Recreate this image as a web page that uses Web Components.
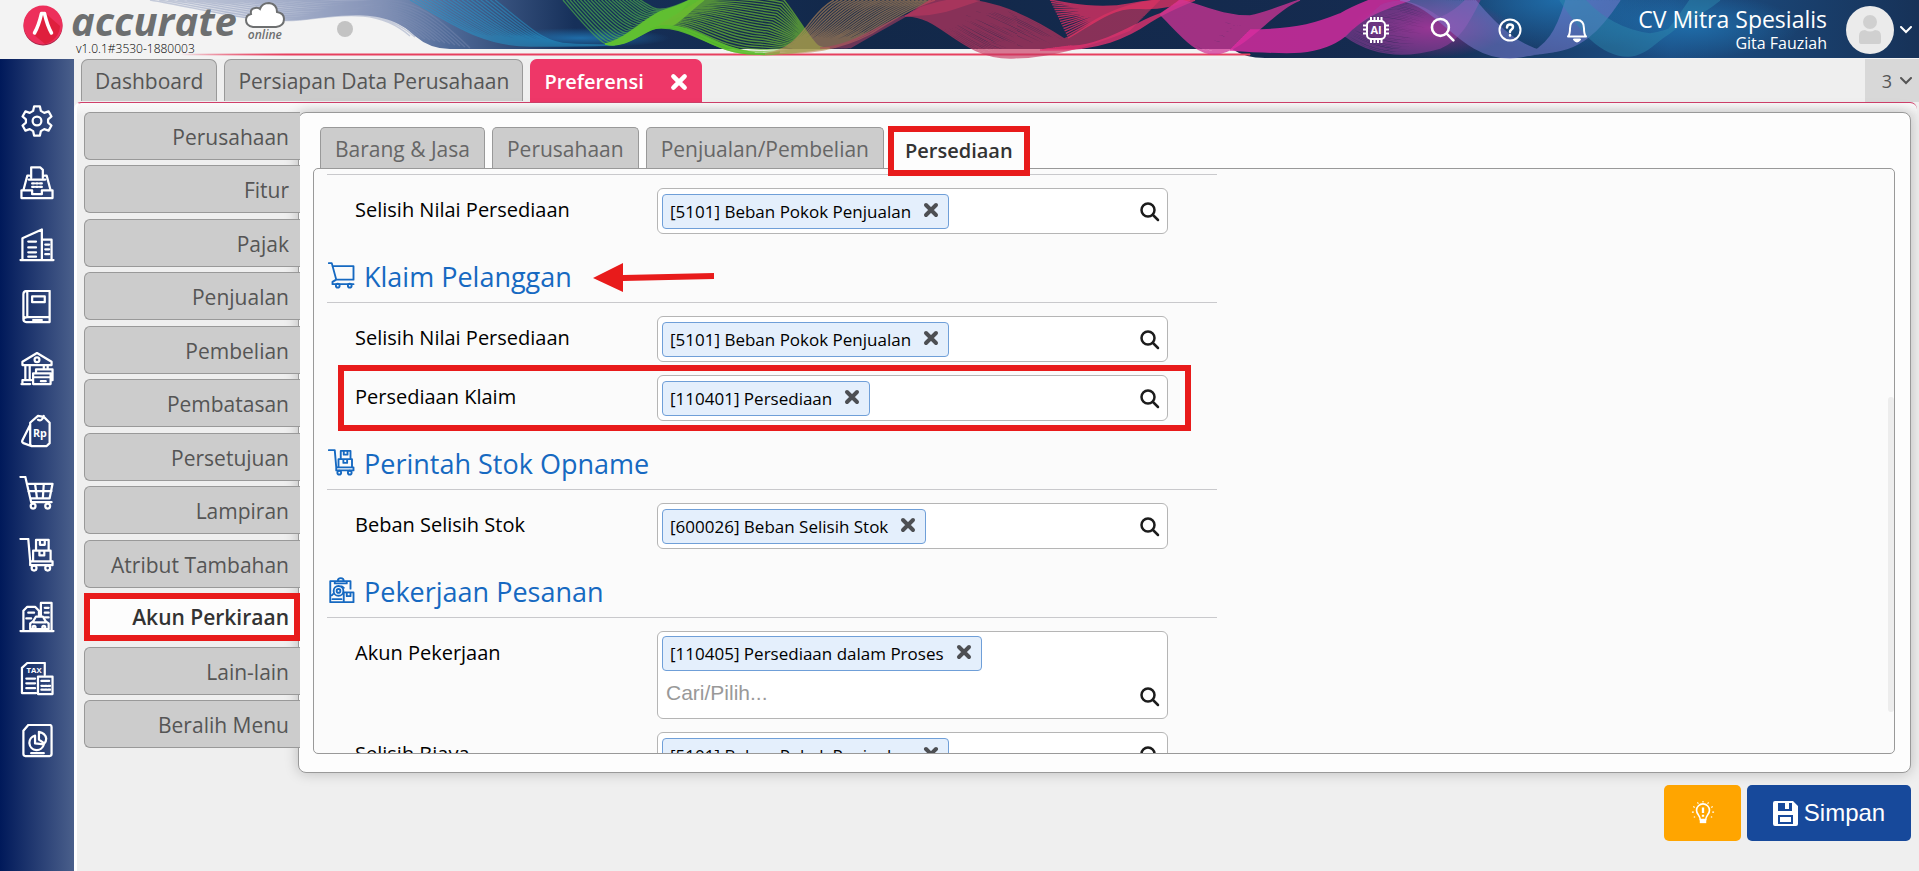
<!DOCTYPE html>
<html lang="id">
<head>
<meta charset="utf-8">
<title>Preferensi - Accurate Online</title>
<style>
  :root {
    --pink: #ee3768;
    --mark: #e81b1b;
    --line: #999;
    --tab: #ccc;
    --blue: #1669c1;
  }
  html, body {
    height: 100%;
  }
  body {
    margin: 0;
    background: #efefef;
    font-family: "Open Sans", "Noto Sans", sans-serif;
    color: #000;
  }
</style>
</head>
<body>
<accurate-app></accurate-app>

<script>
const icons = {
  gear: '<path d="M14 2.5h6l1 4.6 3.4 2 4.5-1.5 3 5.2-3.5 3.1v3.2l3.5 3.1-3 5.2-4.5-1.5-3.4 2-1 4.6h-6l-1-4.6-3.4-2-4.5 1.5-3-5.2 3.5-3.1v-3.2l-3.5-3.1 3-5.2 4.5 1.5 3.4-2z"/><circle cx="17" cy="17.5" r="4.5"/>',
  register: '<path d="M11 12V1.500h9.500l2.500 2.500v8M9 10H7L3 25M25 10h2l4 15M1 25h11v4h10v-4h11v8H1zM8.500 14h17"/><path d="M12 18h2m2 0h2m2 0h2M12 21.500h2m2 0h2m2 0h2" stroke-dasharray="2 2"/>',
  building: '<path d="M2 33V10.500L22 1.500V33M22 12h10v21M0 33h34M8 14h8M8 20h8M8 25h8M8 29.500h8M25.500 17h4M25.500 22h4M25.500 27h4"/>',
  book: '<path d="M7 1h23v32H6q-3 0-3-3V4q0-3 4-3v27M3 31q0-3 4-3h23M12 6.500h13v6H12zM13 31h9"/>',
  bank: '<path d="M2 13.500V10L17 1l15 9v3.500zM5 14v14M9.500 14v14M24 14v3M28 14v3M1 33h9M2 33v-4h9"/><circle cx="17" cy="8" r="2.500"/><path d="M13 22h18v11H13zM13 26h18M16 22v-4h17v11h-2M21 30h5"/>',
  tag: '<path d="M11 8l7-6 6 1 6 6v21l-3 3H12q-2 0-2-2V9zM10 11L2 27q-1 2 1 3l8 3M18 6q4 2 6-4"/><text x="20" y="24" text-anchor="middle" font-size="11" font-weight="700" fill="currentColor" stroke="none">Rp</text>',
  cart: '<path d="M0 1h5l6 26h21M7 8h26l-3 15H10M8 15.500h24M15 8l2 15M24 8l-1 15"/><circle cx="13" cy="31" r="2.500"/><circle cx="28" cy="31" r="2.500"/>',
  trolley: '<path d="M0 1h8l2 23v4h23v-4H10M13 24V13h18v11M16 13V2h13v11M20 2v5h5V2M19.500 13v5h5v-5"/><circle cx="14" cy="31" r="2.500"/><circle cx="28" cy="31" r="2.500"/>',
  city: '<path d="M0 32h34M3 32V11l4-4h8l4 4v5M21 16V3h11v29M25 8h4M25 13h4M25 18h4M8 13h6M6 19h5"/><path d="M10 30v-6l3-2 3-5h7l3 5 3 2v6zM13 23h13"/><circle cx="14" cy="28" r="1.500"/><circle cx="24" cy="28" r="1.500"/>',
  tax: '<path d="M25 13V1H7L1.500 6v26H16M6 17h9M6 22h9M6 27h9M18 15h15v18H18zM21.500 19.500h8"/><path d="M21.500 24.500h2m1.500 0h2m1.500 0h2M21.500 28.500h2m1.500 0h2m1.500 0h2"/><text x="14" y="11.500" text-anchor="middle" font-size="8" font-weight="700" fill="currentColor" stroke="none">TAX</text>',
  report: '<path d="M8 1h22q2 0 2 2v28q0 2-2 2H5q-2 0-2-2V7zM15 12a7.500 7.500 0 1 0 9 9l-9-1zM19 8v8l5.500 4q2-2 2-5-1-6-7.500-7zM11 30h13"/>',
  cartSmall: '<path d="M0 1h4l6 22h23V5H5M10 23l-5 3v3h28"/><circle cx="12" cy="31" r="2.500"/><circle cx="28" cy="31" r="2.500"/>',
  clipboard: '<path d="M8 5H2v28h17M8 5v3h16V5zM24 5h5v10M12 5q0-4 4-4t4 4M5 29h12"/><circle cx="13" cy="18" r="6.500"/><circle cx="13" cy="18" r="2.500"/><path d="M20 20h13v13H20zM24 20v5h5v-5M17 12l3 2M6 22l-2 2"/>',
};

const icon = (name, size, stroke) => `
  <svg width="${size}" height="${size}" viewBox="-1 0 36 35" fill="none" stroke="currentColor"
    stroke-width="${stroke}" stroke-linecap="round" stroke-linejoin="round" aria-hidden="true">${icons[name]}</svg>`;

const magnifier = (size, width) => `
  <svg width="${size}" height="${size}" viewBox="0 0 20 20" fill="none" stroke="currentColor" stroke-width="${width}"
    stroke-linecap="round" aria-hidden="true"><circle cx="8" cy="8" r="6.500"/><path d="M13 13l5 5"/></svg>`;

const cross = (size) => `
  <svg width="${size}" height="${size}" viewBox="0 0 16 16" stroke="currentColor" stroke-width="4"
    stroke-linecap="round" aria-hidden="true"><path d="M3 3l10 10M13 3L3 13"/></svg>`;

const chevron = `
  <svg width="12" height="8" viewBox="0 0 12 8" fill="none" stroke="currentColor" stroke-width="2"
    stroke-linecap="round" aria-hidden="true"><path d="M1 1l5 5 5-5"/></svg>`;

// Each ribbon is a fan of curves between two edges: [x y] start, then cubic segments.
const ribbons = [
  { color: "#7f8fb5", n: 12, opacity: 0.4,
    a: [150, 0, 200, 8, 250, 24, 300, 20, 350, 14, 380, 10, 410, 36],
    b: [260, 0, 300, -4, 340, 6, 380, 0, 420, 0, 440, 20, 470, 48] },
  { color: "#2796c9", n: 18, opacity: 0.55,
    a: [410, 0, 450, 22, 480, 46, 530, 46, 560, 46, 590, 46, 610, 45],
    b: [495, 0, 530, 28, 545, 44, 570, 44, 580, 45, 600, 45, 615, 45] },
  { color: "#4fb04a", n: 22, opacity: 0.65,
    a: [563, 0, 580, 20, 590, 32, 600, 40, 615, 54, 640, 36, 680, 12],
    b: [640, 0, 650, 6, 655, 10, 662, 9, 670, 9, 680, 4, 690, 0] },
  { color: "#62c22f", n: 14, opacity: 0.95,
    a: [605, 44, 630, 50, 645, 26, 665, 27, 675, 28, 690, 10, 704, 0],
    b: [605, 44, 625, 40, 640, 22, 660, 12, 670, 8, 680, 6, 690, 0] },
  { color: "#6cb832", n: 22, opacity: 0.7,
    a: [655, 27, 690, 22, 710, 54, 755, 54, 790, 54, 800, 52, 830, 48],
    b: [700, 0, 720, -6, 760, -6, 784, 0, 800, 20, 810, 40, 820, 48] },
  { color: "#5abf2c", n: 5, opacity: 0.9,
    a: [650, 29, 690, 22, 710, 54, 755, 54, 765, 55, 775, 54, 780, 53],
    b: [660, 26, 694, 22, 715, 48, 755, 53, 765, 54, 775, 53, 780, 52] },
  { color: "#bd8a59", n: 24, opacity: 0.6,
    a: [765, 54, 790, 50, 800, 36, 812, 20, 820, 10, 826, 4, 834, 0],
    b: [765, 54, 810, 54, 840, 50, 870, 34, 890, 22, 910, 8, 935, 0] },
  { color: "#b53f63", n: 20, opacity: 0.55,
    a: [820, 48, 860, 46, 890, 14, 915, 15, 940, 16, 960, 6, 980, 0],
    b: [850, 48, 880, 30, 900, 20, 920, 8, 930, 4, 940, 2, 950, 0] },
  { color: "#c8365f", n: 34, opacity: 0.65,
    a: [905, 16, 940, 14, 960, 58, 1010, 58, 1050, 58, 1090, 46, 1130, 30],
    b: [930, 0, 980, -6, 1020, 10, 1066, 40, 1080, 30, 1110, 4, 1160, 0] },
  { color: "#e63164", n: 16, opacity: 0.75,
    a: [1068, 38, 1090, 26, 1110, 8, 1135, 8, 1160, 10, 1180, 4, 1190, 0],
    b: [1050, 0, 1070, 4, 1100, 10, 1130, 4, 1150, 0, 1160, 0, 1165, 0] },
  { color: "#e0326e", n: 16, opacity: 0.8,
    a: [1040, 50, 1100, 52, 1130, 36, 1150, 22, 1165, 12, 1180, 6, 1195, 0],
    b: [1070, 46, 1100, 48, 1140, 20, 1160, 14, 1170, 8, 1175, 4, 1180, 0] },
  { color: "#d03496", n: 34, opacity: 0.75,
    a: [1160, 14, 1180, 34, 1195, 54, 1215, 54, 1240, 52, 1260, 26, 1290, 4],
    b: [1180, 0, 1200, 4, 1220, 16, 1250, 16, 1270, 12, 1280, 6, 1300, 0] },
  { color: "#dd2ca2", n: 30, opacity: 0.8,
    a: [1230, 50, 1290, 54, 1320, 56, 1345, 36, 1365, 16, 1380, 10, 1410, 0],
    b: [1250, 30, 1300, 30, 1320, 22, 1340, 14, 1350, 8, 1360, 4, 1370, 0] },
  { color: "#a13fa3", n: 34, opacity: 0.5,
    a: [1345, 36, 1370, 54, 1400, 60, 1440, 48, 1460, 40, 1470, 20, 1480, 0],
    b: [1380, 6, 1400, -4, 1420, 4, 1440, 18, 1450, 14, 1460, 6, 1466, 0] },
  { color: "#7f7fd6", n: 40, opacity: 0.5,
    a: [1400, 0, 1440, 6, 1460, 58, 1510, 58, 1550, 56, 1560, 20, 1566, 0],
    b: [1475, 0, 1500, 30, 1520, 46, 1545, 52, 1580, 52, 1600, 30, 1620, 0] },
  { color: "#2f8cb0", n: 34, opacity: 0.45,
    a: [1560, 0, 1580, 30, 1600, 56, 1628, 56, 1650, 56, 1670, 30, 1690, 0],
    b: [1585, 0, 1600, 16, 1620, 30, 1650, 34, 1670, 32, 1700, 16, 1720, 0] },
];

const toPath = (p) => `M${p[0]} ${p[1]}C${p.slice(2).join(" ")}`;

const drawRibbon = ({ color, n, opacity, a, b }) => {
  let d = "";
  for (let i = 0; i <= n; i++) {
    d += toPath(a.map((v, k) => Math.round((v + ((b[k] - v) * i) / n) * 10) / 10));
  }
  return `<path d="${d}" stroke="${color}" stroke-opacity="${opacity}" stroke-width="1.4"/>`;
};

const define = (name, html) => {
  const template = document.createElement("template");
  template.innerHTML = html;
  customElements.define(name, class extends HTMLElement {
    constructor() {
      super();
      this.attachShadow({ mode: "open" });
      this.shadowRoot.appendChild(template.content.cloneNode(true));
    }
  });
};

define("header-waves", `
  <style>
    :host { position: absolute; inset: 0; }
    svg { display: block; width: 100%; height: 100%; }
  </style>
  <svg viewBox="0 0 1919 59" preserveAspectRatio="none" fill="none" aria-hidden="true">
    <defs>
      <linearGradient id="sea" gradientUnits="userSpaceOnUse" x1="150" x2="1919" y1="0" y2="0">
        <stop offset="0" stop-color="#8c9ac0" stop-opacity="0"/>
        <stop offset=".06" stop-color="#8c9ac0" stop-opacity=".4"/>
        <stop offset=".12" stop-color="#7f8eb5" stop-opacity=".85"/>
        <stop offset=".17" stop-color="#4e6997"/>
        <stop offset=".24" stop-color="#16305a"/>
        <stop offset=".4" stop-color="#122849"/>
        <stop offset=".7" stop-color="#152b50"/>
        <stop offset=".86" stop-color="#1c4f85"/>
        <stop offset="1" stop-color="#173258"/>
      </linearGradient>
      <radialGradient id="glow"><stop stop-color="#1f6ca8"/><stop offset="1" stop-color="#1f6ca8" stop-opacity="0"/></radialGradient>
      <radialGradient id="plum"><stop stop-color="#8a2c84"/><stop offset="1" stop-color="#8a2c84" stop-opacity="0"/></radialGradient>
      <linearGradient id="rule" gradientUnits="userSpaceOnUse" x1="180" x2="1250" y1="0" y2="0">
        <stop offset="0" stop-color="#e7405f" stop-opacity="0"/>
        <stop offset=".1" stop-color="#e7405f"/>
        <stop offset="1" stop-color="#e7405f"/>
      </linearGradient>
    </defs>
    <path fill="url(#sea)" d="M150 0C210 10 250 24 300 20C340 16 385 6 415 36Q430 49 450 49H1232Q1245 58 1265 58H1919V0z"/>
    <ellipse cx="580" cy="38" rx="90" ry="10" fill="url(#glow)"/>
    <ellipse cx="1560" cy="0" rx="130" ry="50" fill="url(#glow)"/>
    <ellipse cx="1690" cy="26" rx="110" ry="32" fill="url(#glow)"/>
    <ellipse cx="1430" cy="28" rx="80" ry="30" fill="url(#plum)"/>
    <path d="M180 54H1250v1H180z" fill="url(#rule)" stroke="url(#rule)"/>
    ${ribbons.map(drawRibbon).join("")}
  </svg>`);

define("app-header", `
  <style>
    :host { position: relative; display: flex; align-items: center; height: 59px; background: #f3f3f3; }
    .brand, .tools { position: relative; display: flex; }
    .brand { flex: 1; align-self: stretch; align-items: flex-start; padding-left: 23px; }
    .mark { margin-top: 5px; }
    .name { margin-left: 8px; }
    .word { display: block; font: italic 700 40px/42px "Open Sans", sans-serif; color: #6d6f70; }
    .version { display: block; padding-left: 5px; font-weight: 300; font-size: 12px; line-height: 14px; }
    .cloud { display: flex; flex-direction: column; align-items: center; margin: 2px 0 0 8px; font: italic 600 12px/12px "Open Sans", sans-serif; color: #6d6f70; }
    .dot { width: 16px; height: 16px; margin: 21px 0 0 52px; border-radius: 50%; background: #c3c3c3; }
    .tools { gap: 41px; align-items: center; color: #fff; }
    button { padding: 0; border: 0; background: none; color: inherit; font: inherit; display: flex; align-items: center; }
    .who { padding-left: 7px; text-align: right; }
    .who b { display: block; font-weight: 400; font-size: 23px; line-height: 26px; }
    .who span { display: block; font-size: 16px; line-height: 22px; }
    .user { gap: 6px; padding-right: 7px; margin-left: -22px; }
  </style>
  <header-waves></header-waves>
  <div class="brand">
    <svg class="mark" width="40" height="41" viewBox="0 0 40 41" aria-hidden="true">
      <circle cx="20" cy="21" r="19.500" fill="#a82447"/>
      <circle cx="20" cy="20" r="19.500" fill="#ed2f5b"/>
      <path d="M20 6l17 15a19 19 0 0 1-15 18L10 29z" fill="#df1f3d"/>
      <path d="M11.500 28C15 22 17 15 18.500 8.500h3C23 15 25 22 28.500 28" fill="none" stroke="#fff" stroke-width="3.500" stroke-linecap="round" stroke-linejoin="round"/>
    </svg>
    <div class="name"><span class="word">accurate</span><span class="version">v1.0.1#3530-1880003</span></div>
    <div class="cloud">
      <svg width="40" height="27" viewBox="0 0 40 27" fill="#fff" stroke="#6d6f70" stroke-width="2" aria-hidden="true">
        <path d="M8 25Q1 24 1 18q0-5 5-6-1-5 4-6 3-1 5 1 2-6 9-6 8 1 8 9 7 1 7 7 0 7-8 8z"/>
      </svg>online
    </div>
    <div class="dot"></div>
  </div>
  <div class="tools">
    <button aria-label="AI">
      <svg width="26" height="28" viewBox="0 0 26 28" fill="none" stroke="currentColor" stroke-width="2" aria-hidden="true">
        <rect x="4" y="5" width="18" height="18" rx="4"/>
        <path d="M8 5V1m3.500 4V1m3.500 4V1m3.500 4V1M8 27v-4m3.500 4v-4m3.500 4v-4m3.500 4v-4M0 9.500h4m-4 4h4m-4 4h4m18-8h4m-4 4h4m-4 4h4"/>
        <text x="13" y="18" text-anchor="middle" font-size="11" font-weight="700" fill="currentColor" stroke="none">AI</text>
      </svg>
    </button>
    <button aria-label="Cari">${magnifier(26, 2)}</button>
    <button aria-label="Bantuan">
      <svg width="26" height="26" viewBox="0 0 26 26" fill="none" stroke="currentColor" stroke-width="2" stroke-linecap="round" aria-hidden="true">
        <circle cx="13" cy="13" r="10.500"/><path d="M10 10.500q0-3 3-3t3 2.500q0 1.500-1.500 2.500T13 15M13 18v.5" stroke-width="2.500"/>
      </svg>
    </button>
    <button aria-label="Notifikasi">
      <svg width="26" height="26" viewBox="0 0 26 26" fill="none" stroke="currentColor" stroke-width="2" stroke-linejoin="round" aria-hidden="true">
        <path d="M4 19.500q2-2 2-8 0-8.500 7-8.500t7 8.500q0 6 2 8z"/><path d="M10 22.500q3 4 6 0z" fill="currentColor"/>
      </svg>
    </button>
    <div class="who"><b>CV Mitra Spesialis</b><span>Gita Fauziah</span></div>
    <button class="user" aria-label="Akun">
      <svg width="48" height="48" viewBox="0 0 48 48" fill="#d0d0d0" aria-hidden="true">
        <circle cx="24" cy="24" r="24" fill="#ebebeb"/><circle cx="24" cy="16" r="7"/>
        <path d="M13 36v-6q0-6 6-6 5 3 10 0 6 0 6 6v6q0 2-2 2H15q-2 0-2-2z"/>
      </svg>${chevron}
    </button>
  </div>`);

define("app-sidebar", `
  <style>
    :host { display: flex; flex-direction: column; align-items: center; gap: 28px; box-sizing: border-box;
      width: 74px; padding-top: 45px; background: linear-gradient(90deg, #00195a, #4a5f8b); color: #fff; }
    a { display: block; height: 34px; color: inherit; }
    svg { display: block; height: 34px; }
  </style>
  ${[["gear", "Pengaturan"], ["register", "Kas"], ["building", "Perusahaan"], ["book", "Buku Besar"], ["bank", "Bank"],
     ["tag", "Penjualan"], ["cart", "Pembelian"], ["trolley", "Persediaan"], ["city", "Aset"], ["tax", "Pajak"], ["report", "Laporan"]]
    .map(([name, label]) => `<a href="#${name}" aria-label="${label}">${icon(name, 36, 2.3)}</a>`).join("")}`);

define("page-tabs", `
  <style>
    :host { display: flex; align-items: flex-start; gap: 7px; height: 43px; padding-left: 7px; }
    .more { display: flex; align-items: center; gap: 8px; box-sizing: border-box; height: 43px; margin-left: auto; padding: 0 7px 0 17px;
      border: 0; background: #d8d8d8; color: #555; font: 18px "Open Sans", sans-serif; }
  </style>
  <slot></slot>
  <button class="more" aria-label="3 tab">3 ${chevron}</button>`);

define("page-tab", `
  <style>
    :host { display: block; }
    button { display: flex; align-items: center; gap: 26px; box-sizing: border-box; height: 42px; padding: 0 13px; border: 1px solid #999; border-bottom: 0;
      border-radius: 7px 7px 0 0; background: var(--tab); color: #555; font: 21px "Open Sans", sans-serif; }
    svg { display: none; }
    :host([active]) button { height: 44px; border-color: var(--pink); background: var(--pink); color: #fff; font-weight: 600; font-size: 20px; }
    :host([active]) svg { display: block; }
  </style>
  <button role="tab"><slot></slot>${cross(18)}</button>`);

define("side-menu", `
  <style>
    :host { display: flex; flex-direction: column; justify-content: space-between; }
  </style>
  <slot></slot>`);

define("side-item", `
  <style>
    :host { display: block; }
    button { display: block; box-sizing: border-box; width: 100%; height: 48px; padding: 2px 11px 0 0; border: 1px solid var(--line); border-right: 0;
      border-radius: 6px 0 0 6px; background: var(--tab); color: #555; font: 21px "Open Sans", sans-serif; text-align: right; }
    :host([active]) button { padding: 0 5px 0 0; border: 6px solid var(--mark); border-radius: 0; background: #fdfdfd; color: #333; font-weight: 600; }
  </style>
  <button><slot></slot></button>`);

define("inner-tab", `
  <style>
    :host { display: block; }
    button { display: block; box-sizing: border-box; height: 41px; padding: 2px 14px 0; border: 1px solid var(--line); border-bottom: 0; border-radius: 5px 5px 0 0;
      background: var(--tab); color: #666; font: 21px "Open Sans", sans-serif; }
    :host([active]) { position: relative; margin: -1px 0 -8px -3px; }
    :host([active]) button { height: 50px; padding: 0 11px 2px; border: 6px solid var(--mark); border-radius: 0; background: #fdfdfd; color: #333; font-weight: 600; font-size: 20px; }
  </style>
  <button role="tab"><slot></slot></button>`);

class SectionTitle extends HTMLElement {
  constructor() {
    super();
    this.attachShadow({ mode: "open" });
    this.shadowRoot.innerHTML = `
      <style>
        :host { display: flex; align-items: center; gap: 9px; box-sizing: border-box; height: 56px; padding: 2px 0 0 1px;
          border-bottom: 1px solid #c9c9cc; color: var(--blue); }
        h2 { margin: 0; padding-top: 2px; font-weight: 400; font-size: 27px; line-height: 36px; }
        .arrow { margin: 4px 0 0 12px; }
      </style>
      ${icon(this.getAttribute("icon"), 27, 2.5)}
      <h2><slot></slot></h2>
      ${this.hasAttribute("pointed") ? `
        <svg class="arrow" width="122" height="30" viewBox="0 0 122 30" fill="#e81b1b" aria-hidden="true">
          <path d="M0 15L30 0v12l91-2v6l-91 2v11z"/>
        </svg>` : ""}`;
  }
}
customElements.define("section-title", SectionTitle);

class AccountField extends HTMLElement {
  constructor() {
    super();
    this.attachShadow({ mode: "open" });
    this.shadowRoot.innerHTML = `
      <style>
        :host { position: relative; display: grid; grid-template-columns: 302px minmax(0, 511px); align-items: start; padding-left: 28px; }
        :host([marked])::after { content: ""; position: absolute; inset: -10px 26px -10px 11px; border: 6px solid var(--mark); pointer-events: none; }
        label { font-size: 20px; line-height: 44px; }
        .box { display: flex; align-items: flex-end; box-sizing: border-box; min-height: 46px; padding: 4px; border: 1px solid #b5b5b5; border-radius: 6px; background: #fff; }
        .values { flex: 1; display: flex; flex-wrap: wrap; align-items: center; min-width: 0; }
        .tag { display: flex; gap: 12px; box-sizing: border-box; height: 35px; padding: 0 9px 0 7px; border: 1px solid #6f9fd8; border-radius: 4px; background: #e4effc; font-size: 17px; line-height: 34px; }
        .tag button { height: 30px; color: #4d4f53; }
        button { display: flex; align-items: center; padding: 0; border: 0; background: none; }
        input { flex: 1; min-width: 20px; height: 35px; padding: 0 4px; border: 0; outline: 0; background: none; font: 21px "Liberation Sans", sans-serif; }
        :host([multiple]) input { box-sizing: border-box; flex-basis: 100%; height: 43px; }
        input::placeholder { color: #999; }
        .find { height: 35px; padding: 0 3px; color: #1c1c1c; }
      </style>
      <label for="account">${this.getAttribute("label")}</label>
      <div class="box">
        <div class="values">
          <span class="tag"><slot></slot><button aria-label="Hapus">${cross(16)}</button></span>
          <input id="account" type="text" placeholder="${this.hasAttribute("multiple") ? "Cari/Pilih..." : ""}">
        </div>
        <button class="find" aria-label="Cari">${magnifier(20, 2.5)}</button>
      </div>`;
  }
}
customElements.define("account-field", AccountField);

define("pref-panel", `
  <style>
    :host { position: relative; display: flex; flex-direction: column; box-sizing: border-box; min-height: 0; padding: 14px 15px 18px 14px;
      border: 1px solid var(--line); border-radius: 8px; background: #fdfdfd; box-shadow: 0 0 14px rgba(0, 0, 0, .22); }
    .tabs { display: flex; gap: 7px; padding: 0 7px; z-index: 1; }
    .body { position: relative; flex: 1; min-height: 0; overflow: hidden; padding: 5px 13px 0; border: 1px solid var(--line); border-radius: 5px; background: #fbfbfb; }
    .form { display: grid; gap: 13px; max-width: 890px; }
    .thumb { position: absolute; top: 39%; right: 0; width: 6px; height: 54%; border-radius: 3px; background: #ededed; }
  </style>
  <div class="tabs"><slot name="tab"></slot></div>
  <div class="body"><div class="form"><slot></slot></div><div class="thumb"></div></div>`);

define("action-bar", `
  <style>
    :host { display: flex; justify-content: flex-end; gap: 6px; }
    button { display: flex; align-items: center; justify-content: center; gap: 6px; height: 56px; border: 0; border-radius: 5px; color: #fff; font: 24px "Liberation Sans", sans-serif; }
    .hint { width: 77px; background: #ffa500; }
    .save { width: 164px; background: #17499b; }
  </style>
  <button class="hint" aria-label="Petunjuk">
    <svg width="24" height="24" viewBox="0 0 26 26" fill="none" stroke="currentColor" stroke-width="1.800" aria-hidden="true">
      <path d="M10 20q0-2-2-5a7 7 0 1 1 10 0q-2 3-2 5z"/><path d="M9.500 20h7v4h-7z" fill="currentColor" stroke="none"/>
      <path d="M13 7v6M13 15v2" stroke-width="2.500"/>
      <path d="M13 0v1.500M7 1.500l1 1.500M19 1.500L18 3M2.500 6L4 7M23.500 6L22 7M1 12h2M25 12h-2M3 17.500L4.500 17M23 17.500l-1.500-.5" stroke-width="1.200"/>
    </svg>
  </button>
  <button class="save">
    <svg width="25" height="25" viewBox="0 0 25 25" fill="currentColor" fill-rule="evenodd" aria-hidden="true">
      <path d="M2 0h18l5 5v18q0 2-2 2H2q-2 0-2-2V2q0-2 2-2zM5 2v8h14V2h-3v6h-4V2zM5 14v9h15v-9z"/><path d="M7 16h11v5H7z"/>
    </svg>Simpan
  </button>`);

define("accurate-app", `
  <style>
    :host { display: flex; flex-direction: column; height: 100%; min-height: 700px; }
    .shell { flex: 1; display: grid; grid-template-columns: 74px minmax(0, 1fr); min-height: 0; }
    main { display: flex; flex-direction: column; min-height: 0; }
    .page { flex: 1; display: flex; flex-direction: column; gap: 12px; min-height: 0; margin-right: 2px; padding: 9px 6px 30px 7px;
      border-top: 1px solid #cf3f6a; border-left: 3px solid #fff; border-radius: 7px 7px 0 0; background: linear-gradient(#fafafa, #efefef 12px); }
    .cols { flex: 1; display: grid; grid-template-columns: 214px minmax(0, 1fr); min-height: 0; }
    side-menu { position: relative; z-index: 1; margin: 0 -2px 25px 0; }
    hr { width: 100%; height: 1px; margin: 0; border: 0; background: #c9c9cc; }
  </style>
  <app-header></app-header>
  <div class="shell">
    <app-sidebar></app-sidebar>
    <main>
      <page-tabs>
        <page-tab>Dashboard</page-tab>
        <page-tab>Persiapan Data Perusahaan</page-tab>
        <page-tab active>Preferensi</page-tab>
      </page-tabs>
      <div class="page">
        <div class="cols">
          <side-menu>
            <side-item>Perusahaan</side-item>
            <side-item>Fitur</side-item>
            <side-item>Pajak</side-item>
            <side-item>Penjualan</side-item>
            <side-item>Pembelian</side-item>
            <side-item>Pembatasan</side-item>
            <side-item>Persetujuan</side-item>
            <side-item>Lampiran</side-item>
            <side-item>Atribut Tambahan</side-item>
            <side-item active>Akun Perkiraan</side-item>
            <side-item>Lain-lain</side-item>
            <side-item>Beralih Menu</side-item>
          </side-menu>
          <pref-panel>
            <inner-tab slot="tab">Barang &amp; Jasa</inner-tab>
            <inner-tab slot="tab">Perusahaan</inner-tab>
            <inner-tab slot="tab">Penjualan/Pembelian</inner-tab>
            <inner-tab slot="tab" active>Persediaan</inner-tab>
            <hr>
            <account-field label="Selisih Nilai Persediaan">[5101] Beban Pokok Penjualan</account-field>
            <section-title icon="cartSmall" pointed>Klaim Pelanggan</section-title>
            <account-field label="Selisih Nilai Persediaan">[5101] Beban Pokok Penjualan</account-field>
            <account-field label="Persediaan Klaim" marked>[110401] Persediaan</account-field>
            <section-title icon="trolley">Perintah Stok Opname</section-title>
            <account-field label="Beban Selisih Stok">[600026] Beban Selisih Stok</account-field>
            <section-title icon="clipboard">Pekerjaan Pesanan</section-title>
            <account-field label="Akun Pekerjaan" multiple>[110405] Persediaan dalam Proses</account-field>
            <account-field label="Selisih Biaya">[5101] Beban Pokok Penjualan</account-field>
          </pref-panel>
        </div>
        <action-bar></action-bar>
      </div>
    </main>
  </div>`);
</script>
</body>
</html>
